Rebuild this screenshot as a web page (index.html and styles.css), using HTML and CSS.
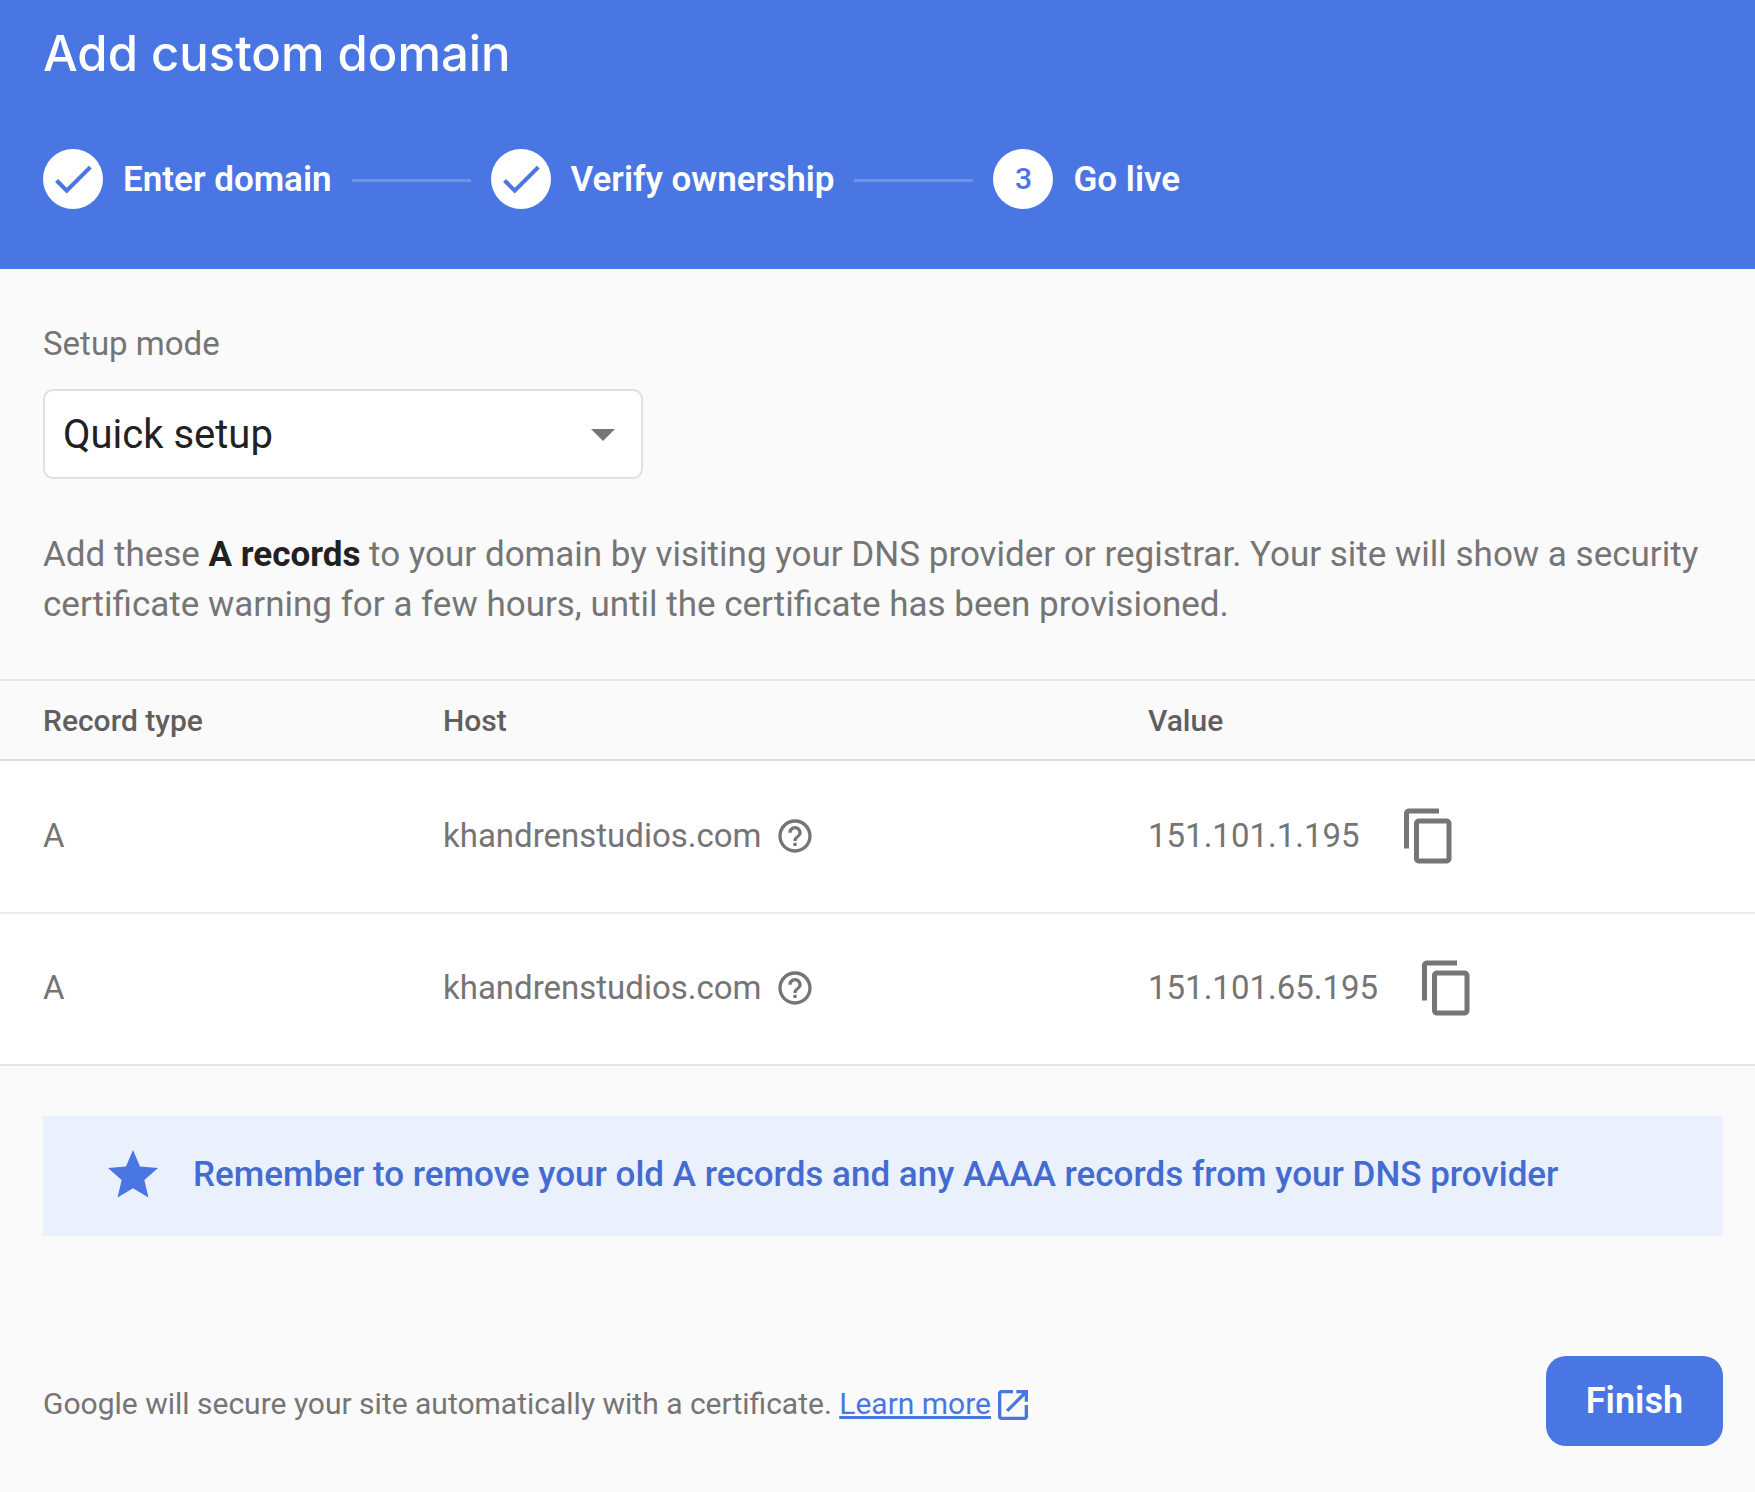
FILE: index.html
```html
<!DOCTYPE html>
<html lang="en">
<head>
<meta charset="utf-8">
<meta name="viewport" content="width=device-width, initial-scale=1">
<title>Add custom domain</title>
<link rel="stylesheet" href="styles.css">
</head>
<body>
<svg class="sprite" aria-hidden="true">
  <symbol id="check" viewBox="0 0 24 24"><path d="M9 16.17 4.83 12l-1.42 1.41L9 19 21 7l-1.41-1.41z"/></symbol>
  <symbol id="help" viewBox="0 0 24 24"><path d="M11 18h2v-2h-2v2zm1-16C6.48 2 2 6.48 2 12s4.48 10 10 10 10-4.48 10-10S17.52 2 12 2zm0 18c-4.41 0-8-3.59-8-8s3.59-8 8-8 8 3.59 8 8-3.59 8-8 8zm0-14c-2.21 0-4 1.79-4 4h2c0-1.1.9-2 2-2s2 .9 2 2c0 2-3 1.75-3 5h2c0-2.25 3-2.5 3-5 0-2.21-1.79-4-4-4z"/></symbol>
  <symbol id="copy" viewBox="0 0 24 24"><path d="M16 1H4c-1.100 0-2 .9-2 2v14h2V3h12V1zm3 4H8c-1.100 0-2 .9-2 2v14c0 1.100.9 2 2 2h11c1.100 0 2-.9 2-2V7c0-1.100-.9-2-2-2zm0 16H8V7h11v14z"/></symbol>
  <symbol id="star" viewBox="0 0 24 24"><path d="M12 17.270 18.180 21l-1.640-7.030L22 9.240l-7.190-.61L12 2 9.190 8.630 2 9.240l5.460 4.730L5.820 21z"/></symbol>
  <symbol id="open" viewBox="0 0 24 24"><path d="M19 19H5V5h7V3H5c-1.110 0-2 .9-2 2v14c0 1.100.89 2 2 2h14c1.100 0 2-.9 2-2v-7h-2v7zM14 3v2h3.590l-9.830 9.830 1.410 1.410L19 6.410V10h2V3h-7z"/></symbol>
</svg>

<header class="header">
  <h1 class="title">Add custom domain</h1>
  <ol class="steps">
    <li class="step">
      <span class="badge"><svg class="badge-icon"><use href="#check"/></svg></span>
      <span class="step-label">Enter domain</span>
    </li>
    <li class="connector" role="presentation"></li>
    <li class="step">
      <span class="badge"><svg class="badge-icon"><use href="#check"/></svg></span>
      <span class="step-label">Verify ownership</span>
    </li>
    <li class="connector" role="presentation"></li>
    <li class="step" aria-current="step">
      <span class="badge">3</span>
      <span class="step-label">Go live</span>
    </li>
  </ol>
</header>

<main>
  <section class="setup">
    <label class="setup-label" for="mode">Setup mode</label>
    <div class="select">
      <select id="mode" class="select-input">
        <option>Quick setup</option>
      </select>
      <svg class="select-arrow" viewBox="0 0 24 12" aria-hidden="true"><path d="M0 0h24L12 12z"/></svg>
    </div>
    <p class="intro">Add these <strong>A records</strong> to your domain by visiting your DNS provider or registrar. Your site will show a security certificate warning for a few hours, until the certificate has been provisioned.</p>
  </section>

  <table class="records">
    <thead>
      <tr><th class="col-type" scope="col">Record type</th><th class="col-host" scope="col">Host</th><th scope="col">Value</th></tr>
    </thead>
    <tbody>
      <tr>
        <td>A</td>
        <td><div class="cell cell-host">khandrenstudios.com <button class="icon-button" type="button" aria-label="About this host"><svg class="icon-small"><use href="#help"/></svg></button></div></td>
        <td><div class="cell cell-value">151.101.1.195 <button class="icon-button" type="button" aria-label="Copy value"><svg class="icon-large"><use href="#copy"/></svg></button></div></td>
      </tr>
      <tr>
        <td>A</td>
        <td><div class="cell cell-host">khandrenstudios.com <button class="icon-button" type="button" aria-label="About this host"><svg class="icon-small"><use href="#help"/></svg></button></div></td>
        <td><div class="cell cell-value">151.101.65.195 <button class="icon-button" type="button" aria-label="Copy value"><svg class="icon-large"><use href="#copy"/></svg></button></div></td>
      </tr>
    </tbody>
  </table>

  <p class="notice"><svg class="icon-large notice-icon" aria-hidden="true"><use href="#star"/></svg>Remember to remove your old A records and any AAAA records from your DNS provider</p>
</main>

<footer class="footer">
  <p class="secure">Google will secure your site automatically with a certificate. <a class="learn" href="#">Learn more</a></p>
  <svg class="icon-small open-icon" aria-hidden="true"><use href="#open"/></svg>
  <button class="finish" type="button">Finish</button>
</footer>
</body>
</html>
```
FILE: styles.css
```css
* {
  box-sizing: border-box;
}

body {
  margin: 0;
  background: #fafafa;
  color: #757575;
  font: 400 33px/40px Roboto, sans-serif;
}

svg {
  display: block;
  fill: currentColor;
}

button,
select {
  font: inherit;
}

.sprite {
  display: none;
}

.header {
  padding: 24px 43px 60px;
  background: #4a76e3;
  color: #fff;
}

.title {
  margin: 0 0 65px;
  font: 500 49px/60px Inter, Roboto, sans-serif;
}

.steps {
  display: flex;
  align-items: center;
  gap: 20px;
  margin: 0;
  padding: 0;
  list-style: none;
}

.step {
  display: flex;
  align-items: center;
  gap: 20px;
}

.step-label {
  padding-top: 2px;
  font-size: 35px;
  font-weight: 600;
}

.badge {
  display: grid;
  place-items: center;
  width: 60px;
  height: 60px;
  border-radius: 50%;
  background: #fff;
  color: #4a76e3;
  font-size: 30px;
  font-weight: 500;
}

.badge-icon {
  width: 50px;
  height: 50px;
}

.connector {
  width: 119px;
  height: 3px;
  margin-top: 2px;
  background: #6e91e9;
}

.setup {
  padding: 55px 43px 49px;
}

.setup-label {
  display: block;
  margin-bottom: 25px;
}

.select {
  display: grid;
  align-items: center;
  max-width: 600px;
}

.select-input {
  grid-area: 1 / 1;
  height: 90px;
  padding: 2px 60px 0 18px;
  border: 2px solid #e0e0e0;
  border-radius: 10px;
  background: #fff;
  color: #212121;
  font-size: 40px;
  appearance: none;
}

.select-arrow {
  grid-area: 1 / 1;
  justify-self: end;
  width: 24px;
  height: 12px;
  margin-top: 2px;
  margin-right: 28px;
  pointer-events: none;
}

.intro {
  margin: 51px 0 0;
  font-size: 35px;
  line-height: 50px;
}

.intro strong {
  color: #212121;
  font-weight: 700;
}

.records {
  width: 100%;
  border-collapse: separate;
  border-spacing: 0;
  table-layout: fixed;
}

.records th {
  height: 82px;
  padding: 2px 0 0;
  border-top: 2px solid #e5e5e5;
  border-bottom: 2px solid #dcdcdc;
  color: #5f5f5f;
  font-size: 30px;
  font-weight: 500;
  text-align: left;
}

.records td {
  height: 153px;
  padding: 0 0 2px;
  border-bottom: 2px solid #ececec;
  background: #fff;
}

.records th:first-child,
.records td:first-child {
  padding-left: 43px;
}

.records tbody tr:last-child td {
  height: 152px;
  border-bottom-color: #e5e5e5;
}

.col-type {
  width: 443px;
}

.col-host {
  width: 705px;
}

.cell {
  display: flex;
  align-items: center;
}

.cell-host {
  gap: 13px;
}

.cell-value {
  gap: 39px;
}

.icon-button {
  padding: 0;
  border: 0;
  background: none;
  color: inherit;
  cursor: pointer;
}

.icon-small {
  width: 40px;
  height: 40px;
}

.icon-large {
  width: 60px;
  height: 60px;
}

.notice {
  display: flex;
  align-items: center;
  gap: 30px;
  margin: 50px 32px 120px 43px;
  padding: 29px 60px 31px;
  background: #eaf0fc;
  color: #446bd0;
  font-size: 35px;
  font-weight: 500;
}

.notice-icon {
  flex: none;
  color: #4a76e3;
}

.footer {
  display: flex;
  align-items: center;
  padding: 0 32px 46px 43px;
}

.secure {
  margin: 5px 0 0;
  font-size: 30px;
}

.learn {
  color: #4a76e3;
  text-decoration-thickness: 3px;
}

.open-icon {
  flex: none;
  margin: 8px 0 0 2px;
  color: #4a76e3;
}

.finish {
  height: 90px;
  margin-left: auto;
  padding: 0 40px;
  border: 0;
  border-radius: 20px;
  background: #4a76e3;
  color: #fff;
  font-size: 36px;
  font-weight: 600;
  cursor: pointer;
}
```
